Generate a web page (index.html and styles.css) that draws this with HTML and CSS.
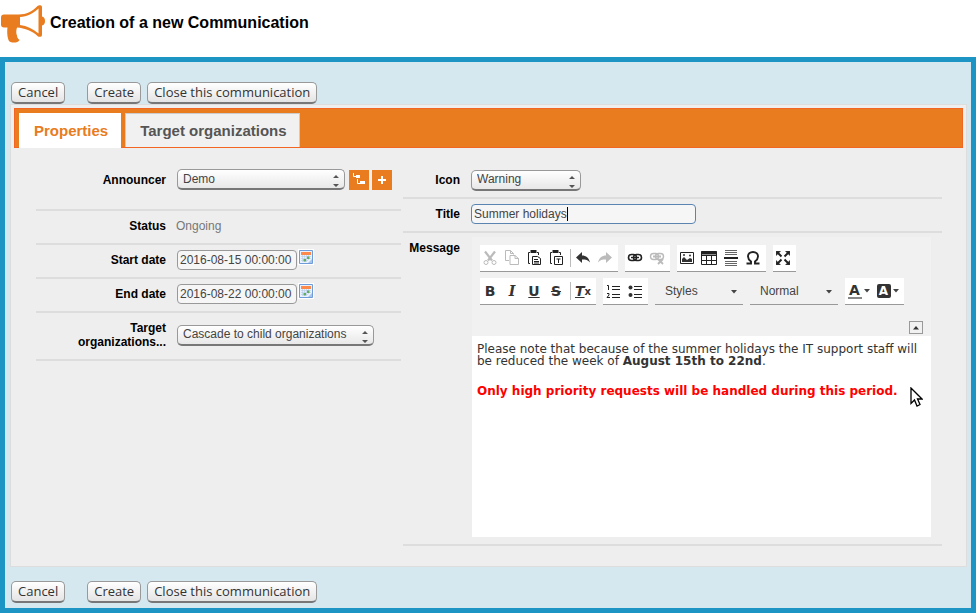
FILE: index.html
```html
<!DOCTYPE html>
<html lang="en">
<head>
    <meta charset="UTF-8">
    <title>Creation of a new Communication</title>
    <link rel="stylesheet" href="styles.css">
</head>
    <body>
        <svg class="symbols" aria-hidden="true">
            <symbol id="updown" viewBox="0 0 6 14">
                <path d="M0 4L3 1l3 3zM0 10h6l-3 3z" fill="#555"/>
            </symbol>
            <symbol id="down" viewBox="0 0 6 4">
                <path d="M0 0h6L3 3.500z" fill="#444"/>
            </symbol>
            <symbol id="calendar" viewBox="0 0 16 16">
                <path d="M0 0h16v16H0z" fill="#fff"/>
                <path d="M1.500 1.500h13v13h-13z" fill="#eaf3fd" stroke="#6f9bd8"/>
                <path d="M3 3h10v3H3z" fill="#fb8a4c"/>
                <path d="M3 7.500h10M3 9.500h10M3 11.500h7M4.500 6v7M6.500 6v7M8.500 6v7M10.500 6v5" stroke="#b5cbe6" stroke-width=".6"/>
                <path d="M9 7.500h2.500V10H9zM5.500 10H8v2.500H5.500z" fill="#63ad5f"/>
                <path d="M14 10v4h-4z" fill="#a9c5ea"/>
            </symbol>
        </svg>

        <header class="page-title">
            <svg class="logo" viewBox="0 0 46 46">
                <path d="M4 14.500h15c7 0 14-3.500 18.500-8.500 1.500-1.500 4.500-1 4.500 1v9.500c2 .5 3 2 3 4.500s-1 4-3 4.500V35c0 2-3 2.500-4.500 1C33 31.500 25 28 17 27.500c-1 3-1 6 0 8 0 2 1 3 2.500 4.500-1 2-3 2.500-5.500 2.500s-5-.5-5.500-2.500C7 36 7 31 7.500 27.500H4c-2 0-3-1-3-3v-7c0-2 1-3 3-3z" fill="#e87c1e"/>
                <path d="M20 17c7-.5 13.500-3.500 18.500-8.500v25C33.500 29 27 26 20 25z" fill="#fff"/>
            </svg>
            <h1>Creation of a new Communication</h1>
        </header>

        <form class="wizard">
            <div class="actions">
                <button type="button" class="btn btn-cancel">Cancel</button>
                <button type="button" class="btn">Create</button>
                <button type="button" class="btn">Close this communication</button>
            </div>

            <div class="panel">
                <nav class="tabs">
                    <a href="#properties" class="tab tab-active">Properties</a>
                    <a href="#organizations" class="tab">Target organizations</a>
                </nav>

                <div class="columns" id="properties">
                    <div class="column column-left">
                        <div class="row row-tall">
                            <label for="announcer">Announcer</label>
                            <div class="value">
                                <span class="select select-wide">
                                    <select id="announcer"><option>Demo</option></select>
                                    <svg><use href="#updown"/></svg>
                                </span>
                                <button type="button" class="square" aria-label="Browse hierarchy">
                                    <svg viewBox="0 0 20 20"><path d="M4.500 3v3.500H7M8.500 9v4.500H11" fill="none" stroke="#fff"/><path d="M7 5h4v3H7zM11 11h5v3h-5z" fill="#fff"/></svg>
                                </button>
                                <button type="button" class="square" aria-label="New organization">
                                    <svg viewBox="0 0 20 20"><path d="M6 10h8M10 6v8" stroke="#fff" stroke-width="2"/></svg>
                                </button>
                            </div>
                        </div>
                        <div class="row">
                            <span class="label">Status</span>
                            <div class="value"><span class="readonly">Ongoing</span></div>
                        </div>
                        <div class="row">
                            <label for="start-date">Start date</label>
                            <div class="value value-date">
                                <input type="text" id="start-date" class="text text-date" value="2016-08-15 00:00:00">
                                <svg class="calendar"><use href="#calendar"/></svg>
                            </div>
                        </div>
                        <div class="row">
                            <label for="end-date">End date</label>
                            <div class="value value-date">
                                <input type="text" id="end-date" class="text text-date" value="2016-08-22 00:00:00">
                                <svg class="calendar"><use href="#calendar"/></svg>
                            </div>
                        </div>
                        <div class="row row-double">
                            <label for="target">Target organizations...</label>
                            <div class="value">
                                <span class="select select-cascade">
                                    <select id="target"><option>Cascade to child organizations</option></select>
                                    <svg><use href="#updown"/></svg>
                                </span>
                            </div>
                        </div>
                    </div>

                    <div class="column column-right">
                        <div class="row row-icon">
                            <label for="icon">Icon</label>
                            <div class="value">
                                <span class="select select-icon">
                                    <select id="icon"><option>Warning</option></select>
                                    <svg><use href="#updown"/></svg>
                                </span>
                            </div>
                        </div>
                        <div class="row">
                            <label for="title">Title</label>
                            <div class="value">
                                <span class="title-field">
                                    <input type="text" id="title" class="text text-focus" value="Summer holidays">
                                    <span class="caret"></span>
                                </span>
                            </div>
                        </div>
                        <div class="row row-message">
                            <span class="label" id="message-label">Message</span>
                            <div class="editor">
                                <div class="toolbar">
                                    <div class="toolbar-row">
                                        <div class="group">
                                            <button type="button" class="tool tool-off" aria-label="Cut"><svg viewBox="0 0 16 16"><path d="M3 1.500l7 9M13 1.500l-7 9" stroke-width="2.200"/><circle cx="4" cy="12.500" r="2"/><circle cx="12" cy="12.500" r="2"/></svg></button>
                                            <button type="button" class="tool tool-off" aria-label="Copy"><svg viewBox="0 0 16 16"><path d="M5 10.500H1.500v-10h5l3 3v1M6.500.5v3h3M6 5.500h5l3.500 3v6H6zM11 5.500v3h3.500"/></svg></button>
                                            <button type="button" class="tool" aria-label="Paste"><svg viewBox="0 0 16 16"><path d="M4 2.500H2.500v11H4M11 2.500h1.500V5"/><path d="M4.500 1.500h6" stroke-width="3"/><path d="M6.500 6.500h5l3 2v6h-8z"/><path d="M8 9.500h4M8 11.500h5M8 13h5"/></svg></button>
                                            <button type="button" class="tool" aria-label="Paste as plain text"><svg viewBox="0 0 16 16"><path d="M4 2.500H2.500v11H4M11 2.500h1.500V5"/><path d="M4.500 1.500h6" stroke-width="3"/><path d="M6.500 6.500h8v8h-8zM8.500 9h4M10.500 9v4"/></svg></button>
                                            <span class="separator"></span>
                                            <button type="button" class="tool" aria-label="Undo"><svg viewBox="0 0 16 16"><path class="solid" d="M7 2L1 7.500 7 13v-3.500c4 0 6 .5 8 3-1-4.500-4-7-8-7z"/></svg></button>
                                            <button type="button" class="tool tool-off" aria-label="Redo"><svg viewBox="0 0 16 16"><path class="solid" d="M9 2l6 5.500L9 13V9.500c-4 0-6 .5-8 3 1-4.500 4-7 8-7z"/></svg></button>
                                        </div>
                                        <div class="group">
                                            <button type="button" class="tool" aria-label="Link"><svg viewBox="0 0 16 16"><rect x="1.500" y="4.500" width="8" height="6" rx="3" stroke-width="1.600"/><rect x="6.500" y="4.500" width="8" height="6" rx="3" stroke-width="1.600"/><path d="M4 7.500h8" stroke-width="1.400"/></svg></button>
                                            <button type="button" class="tool tool-off" aria-label="Unlink"><svg viewBox="0 0 16 16"><rect x="1.500" y="3.500" width="8" height="6" rx="3" stroke-width="1.400"/><rect x="6.500" y="3.500" width="8" height="6" rx="3" stroke-width="1.400"/><path d="M4 6.500h8M9 9l5 5M14 9l-5 5" stroke-width="1.800"/></svg></button>
                                        </div>
                                        <div class="group">
                                            <button type="button" class="tool" aria-label="Image"><svg viewBox="0 0 16 16"><path d="M1.500 2.500h13v11h-13z"/><path class="solid" d="M3 12V9l2-2 3 3 3-2 2 1v3z"/><circle class="solid" cx="5" cy="5" r="1"/><circle class="solid" cx="11" cy="5.500" r="1"/></svg></button>
                                            <button type="button" class="tool" aria-label="Table"><svg viewBox="0 0 16 16"><path d="M.5 1.500h15v13H.5zM0 5.500h16M0 10.500h16M5.500 5v9M10.500 5v9"/><path d="M0 3h16" stroke-width="3"/></svg></button>
                                            <button type="button" class="tool" aria-label="Horizontal line"><svg viewBox="0 0 16 16"><path d="M2 .5h12M2 2.500h12M2 4.500h12M2 11.500h12M2 13.500h12M2 15.500h12" stroke="#666"/><path d="M1 8h14" stroke-width="2"/></svg></button>
                                            <button type="button" class="tool" aria-label="Special character"><svg viewBox="0 0 16 16"><path d="M1.500 13.500H6v-2C4 10 3 8.500 3 6.500 3 4 5 2 8 2s5 2 5 4.500c0 2-1 3.500-3 5v2h4.500" stroke-width="1.900"/></svg></button>
                                        </div>
                                        <div class="group">
                                            <button type="button" class="tool" aria-label="Maximize"><svg viewBox="0 0 16 16"><path class="solid" d="M1 1h5L1 6zM15 1h-5l5 5zM1 15h5l-5-5zM15 15h-5l5-5z"/><path d="M2 2l4.500 4.500M14 2L9.500 6.500M2 14l4.500-4.500M14 14L9.500 9.500" stroke-width="2"/></svg></button>
                                        </div>
                                    </div>
                                    <div class="toolbar-row">
                                        <div class="group">
                                            <button type="button" class="tool"><b>B</b></button>
                                            <button type="button" class="tool"><i>I</i></button>
                                            <button type="button" class="tool"><u>U</u></button>
                                            <button type="button" class="tool"><s>S</s></button>
                                            <span class="separator"></span>
                                            <button type="button" class="tool tool-clear" aria-label="Remove format"><i><u>T</u></i><sub>x</sub></button>
                                        </div>
                                        <div class="group">
                                            <button type="button" class="tool" aria-label="Numbered list"><svg viewBox="0 0 16 16"><path d="M2 2.500h1.500V7M2 10.500h2v1.500L2 14.500h3" /><path d="M7 3.500h8M7 6.500h8M7 11.500h8M7 14.500h8"/></svg></button>
                                            <button type="button" class="tool" aria-label="Bulleted list"><svg viewBox="0 0 16 16"><circle class="solid" cx="3.500" cy="4.500" r="2"/><circle class="solid" cx="3.500" cy="12" r="2"/><path d="M7 3.500h8M7 6.500h8M7 11.500h8M7 14.500h8"/></svg></button>
                                        </div>
                                        <div class="combo">
                                            <select aria-label="Styles"><option>Styles</option></select>
                                            <svg><use href="#down"/></svg>
                                        </div>
                                        <div class="combo">
                                            <select aria-label="Format"><option>Normal</option></select>
                                            <svg><use href="#down"/></svg>
                                        </div>
                                        <div class="group">
                                            <button type="button" class="tool tool-color"><span class="color-text">A</span><svg><use href="#down"/></svg></button>
                                            <button type="button" class="tool tool-color"><span class="color-back">A</span><svg><use href="#down"/></svg></button>
                                        </div>
                                    </div>
                                    <button type="button" class="collapse" aria-label="Collapse toolbar"><svg viewBox="0 0 6 4"><path d="M0 3.500h6L3 0z" fill="#333"/></svg></button>
                                </div>
                                <div class="message" contenteditable="true" role="textbox" aria-labelledby="message-label">
                                    <p>Please note that because of the summer holidays the IT support staff will be reduced the week of <strong>August 15th to 22nd</strong>.</p>
                                    <p class="notice">Only high priority requests will be handled during this period.</p>
                                </div>
                                <svg class="pointer" viewBox="0 0 13 20"><path d="M1 1v15.500l3.500-3.500 2.500 6 3-1.500-2.500-5.500H12z" fill="#fff" stroke="#000" stroke-width="1.300"/></svg>
                            </div>
                        </div>
                    </div>
                </div>
            </div>

            <div class="actions actions-bottom">
                <button type="button" class="btn btn-cancel">Cancel</button>
                <button type="button" class="btn">Create</button>
                <button type="button" class="btn">Close this communication</button>
            </div>
        </form>
    </body>
</html>
```
FILE: styles.css
```css
*
{
    box-sizing: border-box;
}

body
{
    margin: 0;
    background: #fff;
    color: #000;
    font-family: "Liberation Sans", Arial, sans-serif;
    font-size: 12px;
    line-height: 14px;
}

button, input, select
{
    margin: 0;
    font-family: inherit;
    font-size: 12px;
    color: #444;
}

svg
{
    display: block;
    flex: none;
}

.symbols
{
    position: absolute;
    width: 0;
    height: 0;
}

.page-title
{
    display: flex;
    align-items: center;
    gap: 4px;
    height: 57px;
    padding-bottom: 12px;
}

.page-title h1
{
    margin: 0;
    font-size: 16px;
    line-height: 20px;
}

.logo
{
    width: 46px;
    height: 46px;
}

.wizard
{
    border: 5px solid #1c94c4;
    padding: 20px 4px 5px 5px;
    background: #d5e8ef;
}

.actions
{
    display: flex;
    gap: 6px;
    padding-left: 1px;
}

.actions-bottom
{
    padding-top: 14px;
}

.btn
{
    height: 22px;
    padding: 0 6px 1px;
    border: 1px solid #999;
    border-bottom: 2px solid #777;
    border-radius: 5px;
    background: linear-gradient(#fff, #e4e4e4);
    color: #333;
    font-family: "Open Sans", "Noto Sans", sans-serif;
    font-size: 13px;
    line-height: 18px;
    white-space: nowrap;
}

.btn-cancel
{
    margin-right: 16px;
}

.panel
{
    border: 1px solid #ddd;
    padding: 3px;
    background: #eee;
}

.tabs
{
    display: flex;
    gap: 4px;
    height: 40px;
    padding: 4px 4px 0;
    border: 1px solid #f26522;
    background: #e87c1e;
}

.tab
{
    padding: 8px 12px 8px 14px;
    border: 1px solid #ccc;
    border-bottom: 0;
    background: #f1f1f1;
    color: #555;
    font-size: 15px;
    font-weight: bold;
    line-height: 18px;
    text-decoration: none;
    white-space: nowrap;
}

.tab-active
{
    margin-bottom: -1px;
    border-color: #fff;
    background: #fff;
    color: #e87c1e;
}

.columns
{
    display: grid;
    grid-template-columns: minmax(0, 365fr) minmax(0, 539fr);
    gap: 2px;
    align-items: start;
    padding: 15px 21px 17px 22px;
}

.row
{
    display: grid;
    grid-template-columns: 130px minmax(0, 1fr);
    gap: 10px;
    align-items: center;
    min-height: 34px;
    padding-bottom: 2px;
    border-bottom: 2px solid #ddd;
}

.column-right .row
{
    grid-template-columns: 57px minmax(0, 1fr);
    gap: 11px;
}

.row-tall
{
    min-height: 48px;
    padding-bottom: 13px;
}

.row-double
{
    min-height: 48px;
}

.row-icon
{
    min-height: 36px;
    padding: 2px 0;
}

.row label,
.row .label
{
    font-weight: bold;
    text-align: right;
}

.row-double label
{
    padding-left: 40px;
}

.value
{
    display: flex;
    align-items: center;
    gap: 4px;
}

.value-date
{
    gap: 1px;
}

.readonly
{
    color: #777;
}

.select
{
    position: relative;
}

.column-left .select,
.text-date
{
    margin-left: 1px;
}

.select select
{
    display: block;
    width: 100%;
    height: 21px;
    padding: 0 20px 1px 5px;
    appearance: none;
    border: 1px solid #999;
    border-bottom: 2px solid #777;
    border-radius: 5px;
    background: linear-gradient(#fff, #e8e8e8);
}

.select svg
{
    position: absolute;
    top: 5px;
    right: 6px;
    width: 6px;
    height: 14px;
    pointer-events: none;
}

.select-wide
{
    width: 168px;
}

.select-cascade
{
    width: 197px;
}

.select-icon
{
    width: 110px;
}

.square
{
    width: 20px;
    height: 20px;
    padding: 0;
    border: 0;
    background: #e87c1e;
}

.square + .square
{
    margin-left: -1px;
}

.text
{
    display: block;
    height: 20px;
    padding: 0 2px;
    border: 1px solid #999;
    border-radius: 4px;
    background: #f6f6f6;
    outline: 0;
}

.text-date
{
    width: 120px;
}

.calendar
{
    width: 16px;
    height: 16px;
    margin-bottom: 6px;
}

.title-field
{
    position: relative;
    width: 225px;
}

.text-focus
{
    width: 100%;
    border-color: #5b85b0;
}

.caret
{
    position: absolute;
    top: 3px;
    left: 96px;
    width: 1px;
    height: 14px;
    background: #000;
}

.column-right .row-message
{
    align-items: start;
    padding: 4px 11px 7px 0;
}

.row-message .label
{
    padding-top: 4px;
}

.editor
{
    position: relative;
    margin-left: 1px;
}

.toolbar
{
    display: flex;
    flex-direction: column;
    gap: 6px;
    padding: 8px 8px 2px;
    background: #f1f1f1;
}

.toolbar-row
{
    display: flex;
    gap: 7px;
}

.group
{
    display: flex;
    align-items: center;
    height: 27px;
    padding-right: 1px;
    border-bottom: 1px solid #999;
    background: #fff;
}

.tool
{
    display: flex;
    align-items: center;
    justify-content: center;
    width: 22px;
    height: 26px;
    padding: 0 2px 0 0;
    border: 0;
    background: none;
    color: #333;
    font-family: "DejaVu Sans", sans-serif;
    font-size: 14px;
    font-weight: bold;
}

.tool svg
{
    width: 16px;
    height: 16px;
    fill: none;
    stroke: #222;
}

.tool .solid
{
    fill: #333;
    stroke: none;
}

.tool-off svg
{
    stroke: #bbb;
}

.tool-off .solid
{
    fill: #bbb;
}

.tool i
{
    font-family: "DejaVu Serif", serif;
}

.tool-clear i
{
    font-family: inherit;
}

.tool-clear sub
{
    font-size: 10px;
}

.separator
{
    width: 1px;
    height: 18px;
    margin: 0 2px;
    background: #bbb;
}

.combo
{
    position: relative;
    width: 88px;
    height: 27px;
    border-bottom: 1px solid #999;
}

.combo select
{
    width: 100%;
    height: 26px;
    padding: 0 10px;
    appearance: none;
    border: 0;
    background: none;
}

.combo svg
{
    position: absolute;
    top: 12px;
    right: 6px;
    width: 6px;
    height: 4px;
    pointer-events: none;
}

.tool-color
{
    gap: 2px;
    width: 29px;
}

.tool-color svg
{
    width: 6px;
    height: 4px;
    stroke: none;
}

.color-text
{
    width: 14px;
    border-bottom: 2px solid #888;
    line-height: 13px;
}

.color-back
{
    width: 14px;
    border-radius: 2px;
    background: #333;
    color: #fff;
    font-size: 12px;
    line-height: 14px;
}

.collapse
{
    display: flex;
    align-items: center;
    justify-content: center;
    align-self: flex-end;
    width: 14px;
    height: 13px;
    margin-top: 10px;
    padding: 0;
    border: 1px solid #999;
    background: #f1f1f1;
}

.collapse svg
{
    width: 6px;
    height: 4px;
}

.message
{
    min-height: 201px;
    padding: 7px 5px;
    background: #fff;
    color: #333;
    font-family: "DejaVu Sans", sans-serif;
    font-size: 12px;
    line-height: 12px;
}

.message p
{
    margin: 0 0 18px;
}

.message .notice
{
    color: #f00;
    font-weight: bold;
}

.pointer
{
    position: absolute;
    top: 150px;
    right: 8px;
    width: 13px;
    height: 20px;
    pointer-events: none;
}
```
